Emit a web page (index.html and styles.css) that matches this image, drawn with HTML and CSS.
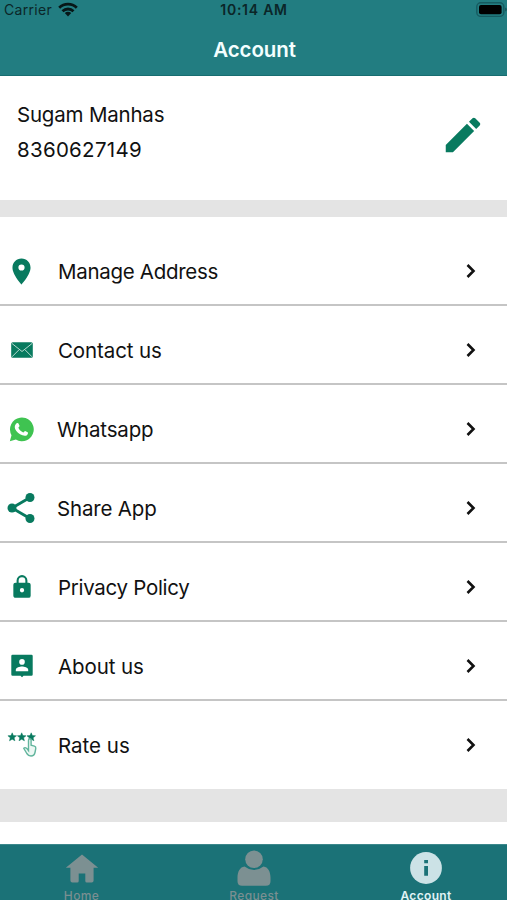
FILE: index.html
```html
<!DOCTYPE html>
<html lang="en">
<head>
<meta charset="utf-8">
<title>Account</title>
<link rel="stylesheet" href="styles.css">
</head>
<body>
<div class="screen">
  <header class="header">
    <div class="status">
      <div class="carrier"><span>Carrier</span>
        <svg class="wifi" viewBox="0 0 20 15"><g fill="none" stroke="#071717" stroke-width="2.8"><path d="M1.2 5.7a12.6 12.6 0 0 1 17.6 0"/><path d="M4.5 9.2a8 8 0 0 1 11 0"/></g><path d="M6.8 11.1a4.8 4.8 0 0 1 6.4 0L10 14.4z" fill="#071717"/></svg>
      </div>
      <span class="time">10:14 AM</span>
      <svg class="battery" viewBox="0 0 31 16"><rect x=".8" y=".8" width="27" height="13.6" rx="4" fill="none" stroke="#165b60" stroke-width="1.4"/><rect x="3" y="3" width="22.6" height="9.2" rx="2" fill="#000"/><path d="M29 5.5v4q2-.5 2-2t-2-2z" fill="#165b60"/></svg>
    </div>
    <h1 class="title">Account</h1>
  </header>

  <section class="profile">
    <div class="identity">
      <span class="name">Sugam Manhas</span>
      <span class="phone">8360627149</span>
    </div>
    <svg class="edit" viewBox="0 0 24 24"><path d="M3 17.25V21h3.75L17.81 9.94l-3.75-3.75L3 17.25zM20.71 7.04a1 1 0 0 0 0-1.41l-2.34-2.34a1 1 0 0 0-1.41 0l-1.83 1.83 3.75 3.75 1.83-1.83z"/></svg>
  </section>

  <nav class="menu">
    <a class="row"><span class="icon"><svg width="31" height="31" viewBox="0 0 24 24"><path d="M12 2C8 2 5 5.100 5 9c0 5.250 7 13 7 13s7-7.750 7-13c0-3.900-3-7-7-7zm0 9.300a2.400 2.400 0 1 1 0-4.800 2.400 2.400 0 0 1 0 4.800z"/></svg></span><span class="label address">Manage Address</span><svg class="chevron" viewBox="0 0 10 16"><path d="M1.500 2l6 6-6 6"/></svg></a>
    <a class="row"><span class="icon"><svg width="22" height="16" viewBox="0 0 22 16"><rect x=".2" y=".3" width="21.600" height="15.400" rx="1.500"/><path d="M1 1.500l10 8 10-8M1 14.800l7-7M21 14.800l-7-7" fill="none" stroke="#b5d9ce" stroke-width="1"/></svg></span><span class="label contact">Contact us</span><svg class="chevron" viewBox="0 0 10 16"><path d="M1.500 2l6 6-6 6"/></svg></a>
    <a class="row shifted"><span class="icon"><svg width="25" height="25" viewBox="0 0 24 24"><path fill="#3fc351" d="M.8 23.200l1.600-5.800A11.400 11.400 0 1 1 6.600 21.700z"/><path fill="#fff" d="M7.300 6.100c.6-.6 1.500-.6 1.800.1l1 2.300c.2.500-.9 1.500-1.100 1.900.8 2 2.500 3.500 4.700 4.400.5 0 1.300-1.500 1.800-1.400l2.400 1.200c.8.400.1 2.200-.7 2.800-1 .8-2.500.9-4.300.2-3.300-1.200-5.800-3.500-7-6.200-.8-2-.2-4 1.400-5.300z"/></svg></span><span class="label whatsapp">Whatsapp</span><svg class="chevron" viewBox="0 0 10 16"><path d="M1.500 2l6 6-6 6"/></svg></a>
    <a class="row shifted"><span class="icon"><svg width="36" height="36" viewBox="0 0 24 24"><path d="M18 5L6 12l12 7" fill="none" stroke="#087a5f" stroke-width="1.900"/><circle cx="18" cy="5" r="3"/><circle cx="6" cy="12" r="3"/><circle cx="18" cy="19" r="3"/></svg></span><span class="label share">Share App</span><svg class="chevron" viewBox="0 0 10 16"><path d="M1.500 2l6 6-6 6"/></svg></a>
    <a class="row"><span class="icon"><svg width="26" height="26" viewBox="0 0 24 24"><path fill-rule="evenodd" d="M18 8h-1V6A5 5 0 0 0 7 6v2H6a2 2 0 0 0-2 2v10c0 1.100.9 2 2 2h12a2 2 0 0 0 2-2V10a2 2 0 0 0-2-2zM8.900 8V6a3.100 3.100 0 0 1 6.200 0v2zM12 17a2 2 0 1 1 0-4 2 2 0 0 1 0 4z"/></svg></span><span class="label privacy">Privacy Policy</span><svg class="chevron" viewBox="0 0 10 16"><path d="M1.500 2l6 6-6 6"/></svg></a>
    <a class="row"><span class="icon"><svg width="22" height="24" viewBox="0 0 22 24"><path d="M1.500.8h19q1.200 0 1.200 1.200v18.500q0 1.200-1.200 1.200h-8L11 23.300l-1.500-1.600h-8Q.3 21.700.3 20.500V2Q.3.8 1.500.8z"/><circle cx="11" cy="7.900" r="2.800" fill="#fff"/><path d="M4.800 17.300v-1.500c0-2.200 4-3.300 6.200-3.300s6.200 1.100 6.200 3.300v1.500z" fill="#fff"/></svg></span><span class="label about">About us</span><svg class="chevron" viewBox="0 0 10 16"><path d="M1.500 2l6 6-6 6"/></svg></a>
    <a class="row last"><span class="icon"><svg width="30" height="28" viewBox="0 0 30 28"><path id="star" stroke="#087a5f" stroke-width=".5" d="M5.200 1.800l1.200 2.800 3.100.2-2.400 2 .8 3-2.700-1.600-2.700 1.600.8-3-2.400-2 3.100-.2z"/><use href="#star" x="9.500"/><use href="#star" x="19"/><path d="M21.500 19.500V9.300q0-1.500 1.300-1.500t1.300 1.500v5l3.300.8q1.600.5 1.400 2.200l-.8 4.200q-.7 3.500-4 3.500-2.600 0-4.200-2.500l-3-5.200q1.700-2 4.700 2.200z" fill="#edf8f4" stroke="#62b59d" stroke-width="1.400"/></svg></span><span class="label rate">Rate us</span><svg class="chevron" viewBox="0 0 10 16"><path d="M1.500 2l6 6-6 6"/></svg></a>
  </nav>
  <div class="space"></div>

  <footer class="tabs">
    <a class="tab"><svg viewBox="0 0 36 36"><path d="M18 4.500L1.800 17.800h4.600v12.600q0 2 2 2h4.800q1.500 0 1.500-1.500v-7.300h6.600v7.300q0 1.500 1.500 1.500h4.800q2 0 2-2V17.800h4.600z"/></svg><span class="home">Home</span></a>
    <a class="tab"><svg viewBox="0 0 36 36"><circle cx="18" cy="9.300" r="8.800"/><path d="M8.500 16.500q9.500 7.200 19 0c4.500.5 7 5.200 7 11v3.700q0 4.600-4.600 4.600H6.100q-4.600 0-4.600-4.600v-3.700c0-5.800 2.500-10.500 7-11z"/></svg><span class="request">Request</span></a>
    <a class="tab active"><svg viewBox="0 0 36 36"><circle cx="18" cy="18" r="15.900"/><path d="M16.200 10h3.800v3.300h-3.800zM16.200 16h3.800v9.800h-3.800z" fill="#1b7277"/></svg><span class="account">Account</span></a>
  </footer>
</div>
</body>
</html>
```

FILE: styles.css
```css
* { box-sizing: border-box; }
body { margin: 0; font-family: Inter, "Liberation Sans", sans-serif; }
.screen { display: flex; flex-direction: column; width: 507px; height: 900px; overflow: hidden; background: #fff; color: #111; }
.header { flex: none; height: 76px; background: #227d81; border-bottom: 1px solid #176d70; }
.status { display: grid; grid-template-columns: 1fr auto 1fr; align-items: center; height: 19px; color: #0b2628; font-size: 14px; }
.carrier { display: flex; align-items: center; gap: 6px; padding-left: 4px; letter-spacing: .3px; }
.wifi { width: 20px; height: 15px; }
.time { padding-left: 1px; font-weight: 600; letter-spacing: .75px; }
.battery { width: 31px; height: 16px; justify-self: end; }
.title { margin: 0; padding: 16px 0 0 2px; text-align: center; font-size: 20.5px; line-height: 30px; font-weight: 600; letter-spacing: -.1px; color: #f4ffff; }
.profile { flex: none; display: flex; justify-content: space-between; height: 124px; padding: 21px 21px 0 17px; }
.identity { display: flex; flex-direction: column; font-size: 20.5px; line-height: 35px; white-space: nowrap; }
.name { letter-spacing: -.2px; }
.phone { letter-spacing: .28px; }
.edit { width: 46px; height: 46px; margin-top: 15px; fill: #087a5f; }
.menu { flex: none; border-top: 17px solid #e4e4e4; padding-top: 10px; }
.row { display: flex; align-items: center; height: 79px; padding: 11px 31px 0 0; border-bottom: 2px solid #c5c5c5; }
.last { height: 88px; padding-bottom: 11px; border-bottom: 0; }
.icon { display: flex; justify-content: center; width: 43px; fill: #087a5f; }
.shifted .icon { width: 42px; }
.label { margin-left: 15px; padding-top: 2px; font-size: 20.5px; line-height: 30px; white-space: nowrap; }
.address, .privacy { letter-spacing: -.3px; }
.contact, .about { letter-spacing: -.1px; }
.whatsapp, .share { letter-spacing: -.17px; }
.chevron { width: 10px; height: 16px; margin-left: auto; fill: none; stroke: #111; stroke-width: 2.6; }
.space { flex: none; height: 33px; background: #e4e4e4; }
.tabs { flex: none; display: grid; grid-template-columns: 163px 182px 162px; height: 56px; margin-top: auto; background: #1b7277; border-top: 1px solid #3c888c; }
.tab { display: flex; flex-direction: column; align-items: center; color: #7a8f91; fill: #7c9092; font-size: 12px; line-height: 14px; font-weight: 500; }
.tab svg { width: 36px; height: 36px; margin-top: 5px; }
.tab span { margin-top: 3px; letter-spacing: .35px; }
.active { color: #e0f3f5; fill: #cce2e6; font-weight: 600; }
```
